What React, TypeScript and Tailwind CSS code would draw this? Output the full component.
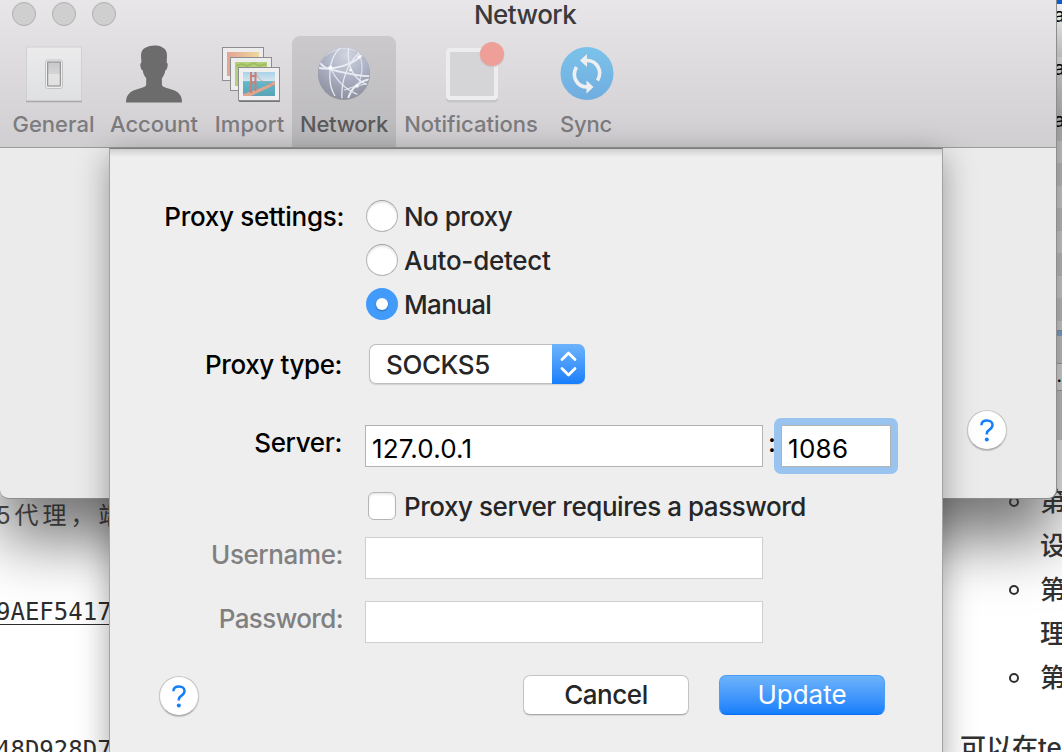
import React from "react";

type TextProps = { children: React.ReactNode; className?: string };

function HelpButton() {
  return (
    <button className="flex size-[40px] items-center justify-center rounded-full border border-[#c6c6c6] border-b-[#adadad] bg-white text-[#147efb] shadow-[0_1px_1px_rgba(0,0,0,0.18)]">
      <svg width="14" height="23" viewBox="0 0 14 23" fill="none">
        <path d="M1.400 6.200C1.500 3.200 3.700 1.500 7 1.500c3.200 0 5.500 1.800 5.500 4.500 0 2.300-1.200 3.400-3 4.600-1.900 1.200-2.700 2.100-2.700 3.900v1" stroke="currentColor" strokeWidth="2.500" />
        <circle cx="6.800" cy="20.500" r="2" fill="currentColor" />
      </svg>
    </button>
  );
}

function ToolItem({ label, icon, className, textClass = "" }: { label: string; icon: React.ReactNode; className: string; textClass?: string }) {
  return (
    <div className={`flex h-[111px] shrink-0 flex-col items-center ${className}`}>
      <div className="flex h-[74px] w-full items-center justify-center">{icon}</div>
      <span className={`whitespace-nowrap text-[22px] leading-[28px] font-[450] ${textClass}`}>{label}</span>
    </div>
  );
}

function GeneralIcon() {
  return (
    <svg width="58" height="60" viewBox="0 0 58 60">
      <defs>
        <linearGradient id="plate" x2="0" y2="1"><stop stopColor="#ebebec" /><stop offset="1" stopColor="#dfe0e2" /></linearGradient>
        <linearGradient id="key" x2="0" y2="1"><stop stopColor="#c8c8cc" /><stop offset=".48" stopColor="#d4d4d7" /><stop offset=".5" stopColor="#e4e4e5" /><stop offset="1" stopColor="#e0e0e1" /></linearGradient>
      </defs>
      <path d="M1.500 4h55v54h-55z" fill="url(#plate)" stroke="#d0d0d2" />
      <path d="M1 58.500h56" stroke="#a9a9ab" strokeWidth="1.300" />
      <rect x="20.500" y="17" width="17" height="28.500" rx="2" fill="#eeeeee" stroke="#c2c2c2" />
      <rect x="22.700" y="19" width="12.600" height="24" fill="url(#key)" stroke="#858587" />
    </svg>
  );
}

function AccountIcon() {
  return (
    <svg width="58" height="60" viewBox="0 0 58 60" fill="#6c6c6c">
      <path d="M29.500 2c3.500 0 6 .6 8 2 3 1.500 4.500 4 4.500 8l-.3 7c1.300.5 1.200 2.500.7 4.500-.4 1.800-1 3-2 3.300-.5 3-1.700 5.800-3.500 8v6c0 2 1.500 2.600 4 3.500 4.500 1.700 8.600 1.800 12 4.700 3.300 2.700 4.100 6 4.100 10H1c0-4 .9-7.300 4.200-10 3.300-2.900 7.300-3 11.800-4.700 2.600-.9 4.200-1.500 4.200-3.500v-6c-1.900-2.200-3.100-5-3.500-8-1.200-.3-1.700-1.500-2.100-3.300-.4-2-.5-4 .8-4.500L16 12c0-4 1.600-6.500 4.800-8 2.400-1.300 5.200-2 8.700-2z" transform="translate(0 .5)" />
    </svg>
  );
}

function ImportIcon() {
  return (
    <svg width="60" height="60" viewBox="0 0 60 60">
      <defs>
        <linearGradient id="warm"><stop stopColor="#e5a393" /><stop offset="1" stopColor="#eed79c" /></linearGradient>
        <linearGradient id="sea" x2="0" y2="1"><stop stopColor="#a9d2ea" /><stop offset=".36" stopColor="#d4e3ec" /><stop offset=".4" stopColor="#5fb9cc" /><stop offset="1" stopColor="#5aa3b5" /></linearGradient>
      </defs>
      <g stroke="#8d8d8f">
        <rect x="1.500" y="3.500" width="41" height="33" fill="#ededed" />
        <rect x="6" y="8" width="32" height="24" fill="url(#warm)" stroke="none" />
        <rect x="9.500" y="13.500" width="41" height="33" fill="#ededed" />
        <rect x="14" y="18" width="32" height="24" fill="#b4cf7c" stroke="none" />
        <path d="M15 22l6-2 5 2 7-3 5 3 7-2" stroke="#9fbd5f" fill="none" strokeWidth="2" />
        <rect x="17.500" y="23.500" width="41" height="33" fill="#efefef" />
      </g>
      <path d="M18 57.500h41" stroke="#77777a" />
      <rect x="22" y="28" width="32" height="24" fill="url(#sea)" />
      <path d="M22 50c10-3 22-7 32-13v3.500C44 46 36 49 30 52h-8z" fill="#dfa48e" />
      <path d="M30 28v21M34.500 28v19M30 32h4M30 38.500h4" stroke="#cc7f74" strokeWidth="2" fill="none" />
      <path d="M35 30c3 6 8 9 19 12" stroke="#cf8d80" strokeWidth=".7" fill="none" />
    </svg>
  );
}

function NetworkIcon() {
  return (
    <svg width="56" height="58" viewBox="0 0 56 58">
      <defs>
        <radialGradient id="globe" cx=".55" cy=".15" r=".95"><stop stopColor="#d0d4e0" /><stop offset=".5" stopColor="#a9afc2" /><stop offset="1" stopColor="#858895" /></radialGradient>
        <clipPath id="disc"><circle cx="28" cy="28" r="25.500" /></clipPath>
      </defs>
      <circle cx="28" cy="29" r="26" fill="#777985" opacity=".6" />
      <circle cx="28" cy="28" r="26" fill="url(#globe)" />
      <g clipPath="url(#disc)" stroke="#e9ebf2" strokeWidth="1.300" fill="none">
        <path d="M3 16c3 6 8 8 18 10 14 3 24 6 34 5" strokeWidth="1.800" />
        <path d="M3 23c14 2 32-2 43-13" strokeWidth="1.800" />
        <path d="M5 15C12 6 26 0 40 6" opacity=".6" />
        <path d="M25 2C16 10 13 22 14 34c0 8 2 12 5 17" />
        <path d="M14 22c5 11 13 22 29 28" opacity=".9" />
        <path d="M33 2c-3 14 2 32 19 38" />
        <path d="M43 8C31 19 25 36 26 54" />
        <path d="M41 5c6 10 6 22 2 32" opacity=".7" />
        <path d="M32 54c3-11 10-18 23-20" strokeWidth="2" />
        <path d="M28 45c10-3 18-7 26-6" opacity=".8" />
      </g>
      <g fill="#fff" opacity=".85"><circle cx="14.500" cy="22.500" r="2" /><circle cx="34.500" cy="25" r="1.500" /><circle cx="43" cy="12" r="1.800" /><circle cx="41" cy="41" r="1.800" /></g>
    </svg>
  );
}

function NotificationsIcon() {
  return (
    <svg width="60" height="62" viewBox="0 0 60 62">
      <rect x="1" y="8.500" width="52" height="53" rx="4" fill="#c6c5c8" />
      <rect x="3" y="9" width="48" height="48" rx="2" fill="#d5d5d8" stroke="#ededed" strokeWidth="4" />
      <circle cx="47" cy="14" r="12.500" fill="#bdbdbf" opacity=".5" />
      <circle cx="47" cy="13" r="12" fill="#ee9f98" />
    </svg>
  );
}

function SyncIcon() {
  return (
    <svg width="54" height="56" viewBox="0 0 54 56">
      <defs><linearGradient id="sky" x2="0" y2="1"><stop stopColor="#7bc3ea" /><stop offset="1" stopColor="#70ade0" /></linearGradient></defs>
      <circle cx="27" cy="27.500" r="26.500" fill="url(#sky)" />
      <g stroke="#efeff1" strokeWidth="3.600" fill="none">
        <path d="M16.500 21C11 30.500 17 41.500 28 41" />
        <path d="M26 14.500C37 14 43 25 37.500 34.500" />
      </g>
      <path d="M27 8v13l-7-6.500zM26.500 34.500v13l7-6.500z" fill="#efeff1" />
    </svg>
  );
}

function Label({ children, className = "" }: TextProps) {
  return <span className={`shrink-0 whitespace-nowrap text-right text-[26px] leading-[32px] ${className}`}>{children}</span>;
}

function Radio({ label, checked, className = "" }: { label: string; checked?: boolean; className?: string }) {
  return (
    <div className="flex h-[32px] items-center gap-[6px]">
      {checked ? (
        <span className="flex size-[32px] items-center justify-center rounded-full bg-[#429bfa]">
          <span className="size-[12px] rounded-full bg-white shadow-[0_1px_2px_rgba(0,0,0,0.3)]" />
        </span>
      ) : (
        <span className="size-[32px] rounded-full border border-[#b4b4b4] border-t-[#a0a0a0] bg-white shadow-[inset_0_2px_2px_rgba(0,0,0,0.1)]" />
      )}
      <span className={`whitespace-nowrap pt-[2px] text-[26px] leading-[32px] ${className}`}>{label}</span>
    </div>
  );
}

function Toolbar() {
  return (
    <header className="h-[148px] border-b border-[#9b9b9b] bg-linear-to-b from-[#e8e6e9] to-[#d0ced1]">
      <div className="flex h-[36px] items-start">
        <div className="flex w-[474px] gap-[16px] pl-[12px] pt-[2px]">
          {[0, 1, 2].map((n) => (
            <span key={n} className="size-[24px] rounded-full border border-[#afafaf] bg-[#cfcfcf]" />
          ))}
        </div>
        <h1 className="text-[26px] leading-[30px] font-[450] tracking-[-0.55px] text-[#3a3a3c]">Network</h1>
      </div>
      <nav className="flex text-[#7c7b7e]">
        <ToolItem label="General" icon={<GeneralIcon />} className="w-[107px]" />
        <ToolItem label="Account" icon={<AccountIcon />} className="w-[94px]" />
        <ToolItem label="Import" icon={<div className="pl-[2px] pt-[2px]"><ImportIcon /></div>} className="w-[91px] pl-[6px]" textClass="tracking-[0.15px]" />
        <ToolItem label="Network" icon={<div className="pt-[2px]"><NetworkIcon /></div>} className="w-[104px] rounded-t-[8px] bg-linear-to-b from-[#cbc9cb] to-[#b9b8ba] text-[#5a595b]" textClass="tracking-[-0.25px]" />
        <ToolItem label="Notifications" icon={<div className="-mt-[2px] pl-[8px]"><NotificationsIcon /></div>} className="w-[150px]" />
        <ToolItem label="Sync" icon={<div className="pl-[2px] pt-[2px]"><SyncIcon /></div>} className="w-[80px]" textClass="tracking-[-0.2px]" />
      </nav>
    </header>
  );
}

function ProxySheet() {
  return (
    <section className="absolute left-[109px] top-[148px] h-[620px] w-[834px] border border-[#a3a3a3] border-t-[#7d7d7d] bg-[#eeeeee] font-[450] text-[#262626] shadow-[0_8px_30px_rgba(0,0,0,0.36)]">
      <div className="h-[8px] bg-linear-to-b from-[#cfcfcf] to-[#eeeeee]" />
      <div className="mt-[43px] flex">
        <Label className="w-[234px] pt-px tracking-[-0.3px] text-black">Proxy settings:</Label>
        <div className="ml-[22px] flex flex-col gap-[12px]">
          <Radio label="No proxy" className="tracking-[-0.55px]" />
          <Radio label="Auto-detect" className="tracking-[-0.25px]" />
          <Radio label="Manual" checked className="tracking-[-0.65px]" />
        </div>
      </div>
      <div className="mt-[24px] flex h-[40px] items-center">
        <Label className="w-[232px] pt-[2px] tracking-[-0.4px] text-black">Proxy type:</Label>
        <div className="ml-[27px] flex h-[40px] w-[216px] rounded-[7px] shadow-[0_1px_1px_rgba(0,0,0,0.12)]">
          <span className="flex-1 rounded-l-[7px] border border-r-0 border-[#bdbdbd] bg-white pl-[16px] text-[26px] leading-[40px] tracking-[-0.4px]">SOCKS5</span>
          <span className="flex w-[33px] items-center justify-center rounded-r-[7px] bg-linear-to-b from-[#6cb3fa] to-[#147efb] text-white">
            <svg width="17" height="26" viewBox="0 0 17 26" fill="none" stroke="currentColor" strokeWidth="2.800" strokeLinecap="round" strokeLinejoin="round">
              <path d="M2 8.500l6.500-6.500L15 8.500M2 17.500l6.500 6.500 6.500-6.500" />
            </svg>
          </span>
        </div>
      </div>
      <div className="mt-[41px] flex h-[42px]">
        <Label className="mt-[2px] w-[232px] tracking-[-0.35px] text-black">Server:</Label>
        <div className="ml-[23px] w-[398px] border border-[#b2b2b2] bg-white pl-[6px] text-[26px] leading-[45px] font-normal tracking-[0.15px] text-black">127.0.0.1</div>
        <span className="ml-[5px] w-[6px] text-[26px] leading-[35px] text-black">:</span>
        <div className="-my-[7px] w-[124px] rounded-[7px] bg-[#99c4f0] p-[7px]">
          <div className="h-[42px] border border-[#b2b2b2] bg-white pl-[6px] text-[26px] leading-[45px] font-normal tracking-[0.3px] text-black">1086</div>
        </div>
      </div>
      <div className="ml-[258px] mt-[25px] flex h-[28px] items-center gap-[8px]">
        <span className="size-[28px] rounded-[6px] border border-[#b5b5b5] bg-white shadow-[inset_0_2px_2px_rgba(0,0,0,0.08)]" />
        <span className="whitespace-nowrap pt-[2px] text-[26px] leading-[32px] tracking-[-0.45px]">Proxy server requires a password</span>
      </div>
      <div className="mt-[17px] flex h-[42px] items-start text-[#808080]">
        <Label className="w-[233px] pt-[2px] tracking-[-0.4px]">Username:</Label>
        <div className="ml-[22px] h-full w-[398px] border border-[#cfcfcf] bg-white" />
      </div>
      <div className="mt-[22px] flex h-[42px] items-start text-[#808080]">
        <Label className="w-[233px] pt-[2px] tracking-[-0.6px]">Password:</Label>
        <div className="ml-[22px] h-full w-[398px] border border-[#cfcfcf] bg-white" />
      </div>
      <div className="mt-[32px] flex h-[42px] items-start">
        <div className="ml-[49px] mr-[324px] mt-px"><HelpButton /></div>
        <button className="h-[40px] w-[166px] rounded-[7px] border border-[#c4c4c4] border-b-[#aaaaaa] bg-white text-[26px] leading-[38px] tracking-[-0.45px] shadow-[0_1px_1px_rgba(0,0,0,0.1)]">Cancel</button>
        <button className="ml-[30px] h-[40px] w-[166px] rounded-[7px] border border-[#4a9df5] border-b-[#0f6cf5] bg-linear-to-b from-[#6cb3fa] to-[#147efb] text-[26px] leading-[38px] font-normal text-white">Update</button>
      </div>
    </section>
  );
}

function BackgroundPanel() {
  return (
    <div className="absolute left-[1054px] top-0 flex h-[440px] w-[8px] flex-col overflow-hidden bg-[#e0e0e0] text-[19px] text-black">
      <div className="h-[4px] shrink-0 bg-[#0a62d8]" />
      <div className="h-[53px] shrink-0 bg-linear-to-b from-[#f6f6f6] to-[#e0e0e0] leading-[24px]">al</div>
      <div className="h-[52px] shrink-0 bg-linear-to-b from-[#f0f0f0] to-[#d8d8d8] leading-[24px]">a</div>
      <div className="h-[32px] shrink-0 bg-[#d4d4d4] leading-[24px]">au</div>
      {[0, 1, 2, 3].map((n) => (
        <div key={n} className="shrink-0">
          <div className="h-[22px] bg-[#e6e6e6]" />
          <div className="h-[23px] bg-[#d6d6d6]" />
        </div>
      ))}
      <div className="h-[10px] shrink-0 border-b border-[#a0a0a0] bg-[#e6e6e6]" />
      <div className="h-[5px] shrink-0 bg-[#8db6e6]" />
      <div className="h-[28px] shrink-0 border-b border-[#b0b0b0] bg-[#dadada]" />
      <div className="h-[27px] shrink-0 border-b border-[#b0b0b0] bg-[#efefef] text-right leading-[24px]">.</div>
      <div className="flex-1 bg-[#d8d8d8]" />
    </div>
  );
}

export default function App() {
  return (
    <main className="relative h-[752px] w-[1062px] overflow-hidden bg-white font-['Inter','Noto_Sans_CJK_SC',sans-serif]">
      <div className="absolute left-[-4px] top-[498px] whitespace-nowrap text-[#2d2d2d]">
        <p className="h-[98px] text-[24px] leading-[36px] tracking-[4px] text-[#555555]">5代理，端</p>
        <p className="h-[138px] font-['DejaVu_Sans_Mono',monospace] text-[24px] leading-[32px] underline decoration-1 underline-offset-4">9AEF5417</p>
        <p className="font-['DejaVu_Sans_Mono',monospace] text-[24px] leading-[32px]">48D928D7</p>
      </div>
      <BackgroundPanel />
      <div className="absolute left-0 top-0 h-[499px] w-[1057px] rounded-b-[9px] border-b border-r border-[#8d8d8d] bg-[#ebebeb] shadow-[0_40px_64px_rgba(0,0,0,0.55)]" />
      <div className="absolute left-[960px] top-[480px] whitespace-nowrap text-[26px] leading-[44px] font-medium text-[#303030]">
        {["第一", "设置", "第二", "理后", "第三"].map((line, i) => (
          <div key={line} className="flex h-[44px] items-center">
            <span className="flex w-[80px] pl-[49px]">
              {i % 2 === 0 && <i className="size-[10px] rounded-full border-2 border-[#303030]" />}
            </span>
            <span>{line}</span>
          </div>
        ))}
        <p className="mt-[26px]">可以在te</p>
      </div>
      <div className="absolute left-0 top-0 h-[499px] w-[1057px] rounded-b-[9px] border-b border-r border-[#8d8d8d] bg-[#ebebeb]">
        <Toolbar />
        <div className="absolute left-[967px] top-[410px]"><HelpButton /></div>
      </div>
      <ProxySheet />
    </main>
  );
}
